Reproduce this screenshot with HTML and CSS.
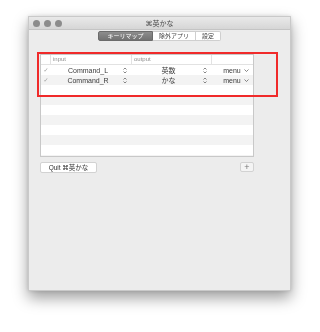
FILE: index.html
```html
<!DOCTYPE html>
<html lang="ja">
<head>
    <meta charset="UTF-8">
    <title>⌘英かな</title>
    <link rel="stylesheet" href="styles.css">
</head>
<body>
    <div class="desktop">
        <div class="window">
            <div class="titlebar">
                <div class="lights"><span></span><span></span><span></span></div>
                <div class="title">⌘英かな</div>
                <div></div>
            </div>

            <div class="content">
                <div class="tabs">
                    <span class="tab active">キーリマップ</span>
                    <span class="tab">除外アプリ</span>
                    <span class="tab">設定</span>
                </div>

                <div class="table">
                    <div class="row head">
                        <div class="cell check"></div>
                        <div class="cell">input</div>
                        <div class="cell">output</div>
                        <div class="cell"></div>
                    </div>
                    <div class="body">
                        <div class="row">
                            <div class="cell check">✓</div>
                            <div class="cell popup"><span class="label">Command_L</span><svg class="arrows" viewBox="0 0 4 7"><path d="M0.5 2.5 L2 1 L3.5 2.5 M0.5 4.5 L2 6 L3.5 4.5"/></svg></div>
                            <div class="cell popup"><span class="label">英数</span><svg class="arrows" viewBox="0 0 4 7"><path d="M0.5 2.5 L2 1 L3.5 2.5 M0.5 4.5 L2 6 L3.5 4.5"/></svg></div>
                            <div class="cell popup menu"><span class="label">menu</span><svg class="down" viewBox="0 0 5 3"><path d="M0.5 0.5 L2.5 2.5 L4.5 0.5"/></svg></div>
                        </div>
                        <div class="row">
                            <div class="cell check">✓</div>
                            <div class="cell popup"><span class="label">Command_R</span><svg class="arrows" viewBox="0 0 4 7"><path d="M0.5 2.5 L2 1 L3.5 2.5 M0.5 4.5 L2 6 L3.5 4.5"/></svg></div>
                            <div class="cell popup"><span class="label">かな</span><svg class="arrows" viewBox="0 0 4 7"><path d="M0.5 2.5 L2 1 L3.5 2.5 M0.5 4.5 L2 6 L3.5 4.5"/></svg></div>
                            <div class="cell popup menu"><span class="label">menu</span><svg class="down" viewBox="0 0 5 3"><path d="M0.5 0.5 L2.5 2.5 L4.5 0.5"/></svg></div>
                        </div>
                    </div>
                </div>

                <div class="footer">
                    <button class="btn">Quit ⌘英かな</button>
                    <button class="btn plus">+</button>
                </div>
            </div>

            <div class="highlight"></div>
        </div>
    </div>
</body>
</html>
```

FILE: styles.css
```css
* {
    margin: 0;
    padding: 0;
    box-sizing: border-box;
}

body {
    font-family: "Liberation Sans", "DejaVu Sans", "Noto Sans CJK JP", sans-serif;
    background: #ffffff;
    color: #333;
    width: 320px;
    height: 332px;
    overflow: hidden;
}

.desktop {
    padding: 16px 0 0 28px;
}

.window {
    position: relative;
    width: 263px;
    height: 275px;
    background: #ececec;
    border: 1px solid #c9c9c9;
    box-shadow: 0 7px 14px rgba(0,0,0,0.38), 0 0 4px rgba(0,0,0,0.12);
    will-change: transform;
}

.titlebar {
    height: 13px;
    display: grid;
    grid-template-columns: 1fr auto 1fr;
    align-items: center;
    background: linear-gradient(#e9e9e9, #d6d6d6);
    border-bottom: 1px solid #c4c4c4;
}

.lights {
    display: flex;
    gap: 4px;
    padding-left: 4px;
}

.lights span {
    width: 7px;
    height: 7px;
    border-radius: 50%;
    background: #8c8c8c;
}

.title {
    font-size: 7px;
    color: #4a4a4a;
    line-height: 1;
    padding-top: 1px;
}

.content {
    padding: 1px 0 0 11px;
}

.tabs {
    display: flex;
    justify-content: center;
    margin-left: -11px;
    height: 10px;
}

.tab {
    font-size: 6px;
    line-height: 8px;
    color: #444;
    background: #fff;
    border: 1px solid #cfcfcf;
    border-left: none;
    text-align: center;
    white-space: nowrap;
    width: 43px;
}

.tab:first-child {
    border-left: 1px solid #cfcfcf;
    border-radius: 2px 0 0 2px;
    width: 55px;
}

.tab:last-child {
    border-radius: 0 2px 2px 0;
    width: 25px;
}

.tab.active {
    background: linear-gradient(#8d8d8d, #727272);
    border-color: #6b6b6b;
    color: #fff;
}

.table {
    margin-top: 13px;
    width: 214px;
    height: 103px;
    border: 1px solid #c8c8c8;
    background: #fff;
}

.row {
    display: grid;
    grid-template-columns: 10px 81px 80px 41px;
    height: 10px;
    align-items: center;
}

.row.head {
    border-bottom: 1px solid #e2e2e2;
}

.row.head .cell {
    font-size: 6px;
    color: #8f8f8f;
    padding-left: 2px;
    height: 100%;
    line-height: 9px;
    border-right: 1px solid #e2e2e2;
}

.row.head .cell:last-child {
    border-right: none;
}

.body {
    height: 91px;
    background: repeating-linear-gradient(#ffffff 0 10px, #f3f3f3 10px 20px);
}

.cell {
    font-size: 7px;
    line-height: 1;
    white-space: nowrap;
}

.cell.check {
    color: #9a9a9a;
    font-size: 6px;
    text-align: center;
}

.popup {
    display: flex;
    align-items: center;
    padding-right: 5px;
    color: #3a3a3a;
}

.popup .label {
    flex: 1;
    text-align: center;
    padding-left: 2px;
}

.arrows {
    width: 4px;
    height: 7px;
    fill: none;
    stroke: #555;
    stroke-width: 0.7;
}

.menu {
    padding-left: 8px;
    padding-right: 4px;
}

.down {
    width: 5px;
    height: 3px;
    margin-left: 2px;
    fill: none;
    stroke: #555;
    stroke-width: 0.7;
}

.footer {
    display: flex;
    justify-content: space-between;
    width: 214px;
    margin-top: 5px;
}

.btn {
    font-family: "Liberation Sans", "DejaVu Sans", "Noto Sans CJK JP", sans-serif;
    font-size: 6.5px;
    color: #333;
    background: #fff;
    border: 1px solid #d2d2d2;
    border-radius: 2px;
    height: 11px;
    width: 57px;
    line-height: 9px;
}

.btn.plus {
    width: 14px;
    height: 10px;
    font-size: 9px;
    line-height: 7px;
    color: #777;
    background: #f4f4f4;
}

.highlight {
    position: absolute;
    left: 8px;
    top: 35px;
    width: 241px;
    height: 45px;
    border: 2px solid #f02a2a;
}
```
